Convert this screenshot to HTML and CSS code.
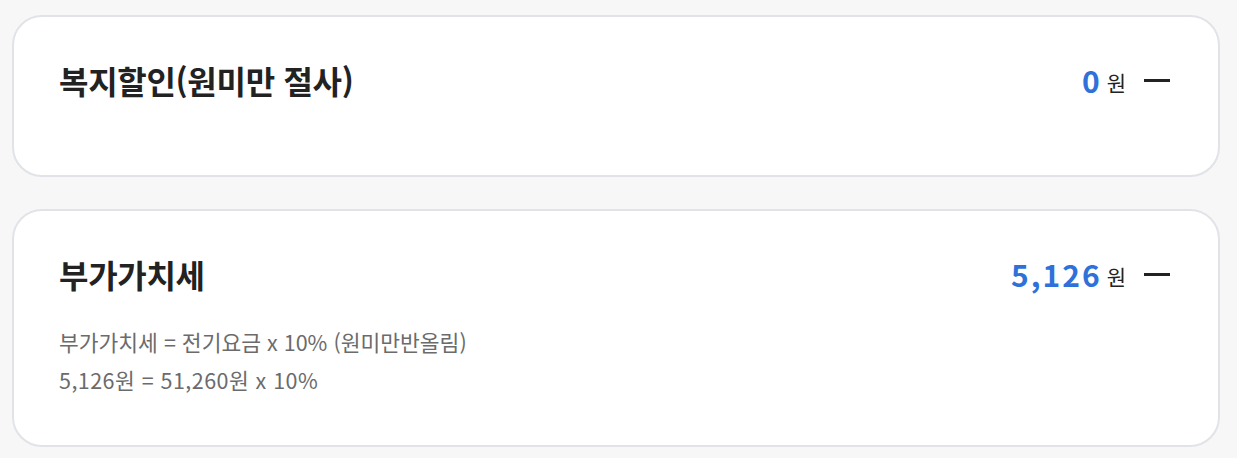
FILE: index.html
```html
<!DOCTYPE html>
<html lang="ko">
<head>
<meta charset="utf-8">
<link rel="stylesheet" href="styles.css">
</head>
<body>
<div class="list">
  <section class="card">
    <div class="head">
      <h2 class="title">복지할인(원미만 절사)</h2>
      <div class="right">
        <span class="amount">0</span><span class="unit">원</span>
        <span class="dash"></span>
      </div>
    </div>
  </section>
  <section class="card">
    <div class="head">
      <h2 class="title">부가가치세</h2>
      <div class="right">
        <span class="amount">5,126</span><span class="unit">원</span>
        <span class="dash"></span>
      </div>
    </div>
    <div class="desc">
      <p>부가가치세 = 전기요금 x 10% (원미만반올림)</p>
      <p class="calc">5,126원 = 51,260원 x 10%</p>
    </div>
  </section>
</div>
</body>
</html>
```
FILE: styles.css
```css
html, body {
  margin: 0;
  padding: 0;
  background: #f7f7f7;
  font-family: "Noto Sans CJK KR", "Noto Sans", sans-serif;
}
.list {
  display: flex;
  flex-direction: column;
  gap: 32px;
  padding: 15px 17px 0 12px;
}
.card {
  background: #fff;
  border: 2px solid #e1e3e8;
  border-radius: 30px;
  min-height: 162px;
  box-sizing: border-box;
  padding: 43px 48px 46px 45px;
}
.head {
  display: flex;
  align-items: center;
  justify-content: space-between;
  height: 40px;
}
.title {
  margin: 0;
  font-size: 32px;
  font-weight: 700;
  color: #222;
  letter-spacing: -0.3px;
}
.right {
  display: flex;
  align-items: center;
}
.amount {
  font-size: 30px;
  font-weight: 700;
  color: #2f71d9;
  letter-spacing: 2px;
}
.unit {
  font-size: 21px;
  color: #222;
  margin-left: 5px;
  margin-top: 4px;
}
.dash {
  display: block;
  width: 26px;
  height: 3px;
  background: #222;
  margin-left: 18px;
}
.desc {
  margin-top: 29px;
  font-size: 21.5px;
  color: #6b6b6b;
  line-height: 38px;
}
.desc p {
  margin: 0;
}
.desc .calc {
  letter-spacing: 0.45px;
}
```
